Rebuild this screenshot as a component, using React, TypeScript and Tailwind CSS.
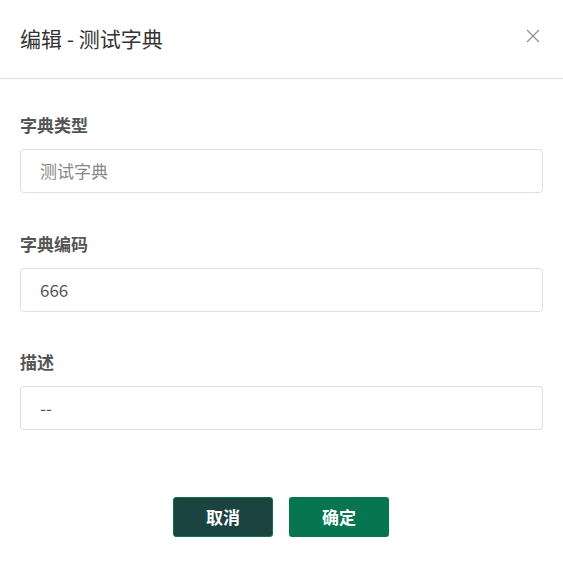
import React from 'react';

const font = { fontFamily: '"Noto Sans CJK SC", "Noto Sans", sans-serif' };

interface FieldProps {
  label: string;
  value: string;
  muted?: boolean;
  className?: string;
}

function Field({ label, value, muted, className = '' }: FieldProps) {
  return (
    <div className={`flex flex-col ${className}`}>
      <label className="text-[17px] font-bold text-[#555] leading-[24px]">{label}</label>
      <div className="mt-[12px] h-[44px] rounded-[4px] border border-[#dcdfe6] flex items-center px-[19px]">
        <span className={`text-[17px] ${muted ? 'text-[#888]' : 'text-[#555]'}`}>{value}</span>
      </div>
    </div>
  );
}

export default function App() {
  return (
    <div className="w-[563px] h-[561px] bg-white" style={font}>
      <div className="h-[79px] border-b border-[#dcdfe6] flex items-center justify-between pl-[20px] pr-[22px]">
        <h2 className="text-[21px] text-[#333] leading-[28px] -mt-[2px]">编辑 - 测试字典</h2>
        <button className="text-[#909399] -mt-[6px]">
          <svg width="16" height="16" viewBox="0 0 16 16" fill="none" stroke="currentColor" strokeWidth="1.3">
            <path d="M2 2L14 14M14 2L2 14" />
          </svg>
        </button>
      </div>
      <div className="px-[20px] pt-[34px] flex flex-col">
        <Field label="字典类型" value="测试字典" muted />
        <Field label="字典编码" value="666" className="mt-[39px]" />
        <Field label="描述" value="--" className="mt-[38px]" />
      </div>
      <div className="flex justify-center gap-[16px] mt-[67px] pr-[1px]">
        <button className="w-[100px] h-[40px] rounded-[3px] bg-[#1b4441] border border-[#0a7350] text-white text-[17px] font-bold">
          取消
        </button>
        <button className="w-[100px] h-[40px] rounded-[3px] bg-[#077550] text-white text-[17px] font-bold">
          确定
        </button>
      </div>
    </div>
  );
}
